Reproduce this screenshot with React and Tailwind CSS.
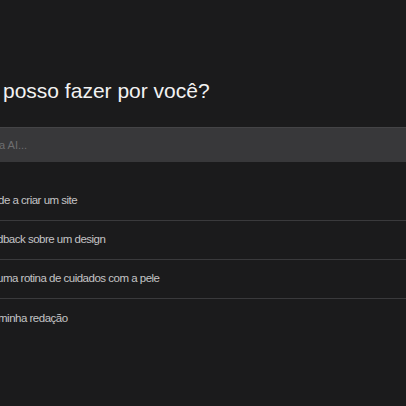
export default function App() {
  const rows = [
    { text: "de a criar um site", ml: "-ml-[2px]" },
    { text: "dback sobre um design", ml: "-ml-[3px]" },
    { text: "uma rotina de cuidados com a pele", ml: "-ml-[3px]" },
    { text: "minha redação", ml: "-ml-[2px]" },
  ];
  return (
    <div
      className="w-[406px] h-[406px] overflow-hidden bg-[#1b1b1c] flex flex-col"
      style={{ fontFamily: '"Liberation Sans", Arial, sans-serif' }}
    >
      <div className="pt-[76px] pl-[3px] text-[21px] leading-[30px] text-[#f2f2f2] whitespace-nowrap">
        posso fazer por você?
      </div>
      <div className="mt-[21px] h-[35px] bg-[#38383a] flex items-center border-t border-[#444446]">
        <span className="-ml-[1px] text-[11px] text-[#6e6e70] whitespace-nowrap">a AI...</span>
      </div>
      <div className="mt-[20px] flex flex-col">
        {rows.map((r, i) => (
          <div
            key={i}
            className={`h-[39px] flex items-center ${i < rows.length - 1 ? "border-b border-[#3a3a3c]" : ""}`}
          >
            <span className={`${r.ml} text-[11.5px] tracking-[-0.5px] text-[#c4c4c6] whitespace-nowrap`}>{r.text}</span>
          </div>
        ))}
      </div>
    </div>
  );
}
